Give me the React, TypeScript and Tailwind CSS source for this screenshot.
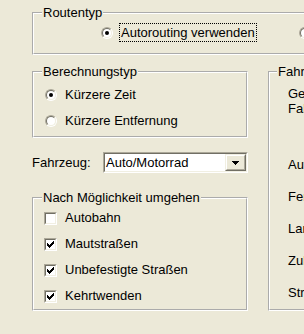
const groupBox =
  'min-w-0 border-2 border-white [--tw-border-style:groove] [border-style:groove]';

const Radio = ({ checked }: { checked?: boolean }) => (
  <span className="flex h-[12px] w-[12px] shrink-0 rounded-full border border-t-[#ACA899] border-l-[#ACA899] border-r-white border-b-white">
    <span className="flex flex-1 items-center justify-center rounded-full border border-t-[#716F64] border-l-[#716F64] border-r-[#F1EFE2] border-b-[#F1EFE2] bg-white">
      {checked && <span className="h-[4px] w-[4px] rounded-full bg-black" />}
    </span>
  </span>
);

const Check = ({ checked }: { checked?: boolean }) => (
  <span className="flex h-[13px] w-[13px] shrink-0 border border-t-[#ACA899] border-l-[#ACA899] border-r-white border-b-white">
    <span className="flex flex-1 items-center justify-center border border-t-[#716F64] border-l-[#716F64] border-r-[#F1EFE2] border-b-[#F1EFE2] bg-white">
      {checked && (
        <svg width="7" height="7" viewBox="0 0 7 7" shapeRendering="crispEdges">
          <rect x="0" y="2" width="1" height="3" fill="#000" />
          <rect x="1" y="3" width="1" height="3" fill="#000" />
          <rect x="2" y="4" width="1" height="3" fill="#000" />
          <rect x="3" y="3" width="1" height="3" fill="#000" />
          <rect x="4" y="2" width="1" height="3" fill="#000" />
          <rect x="5" y="1" width="1" height="3" fill="#000" />
          <rect x="6" y="0" width="1" height="3" fill="#000" />
        </svg>
      )}
    </span>
  </span>
);

const Legend = ({ children, right }: { children: string; right?: boolean }) => (
  <legend className={`${right ? 'ml-[7px]' : 'ml-2'} px-px leading-[14px]`}>{children}</legend>
);

const avoid = [
  { label: 'Autobahn', checked: false },
  { label: 'Mautstraßen', checked: true },
  { label: 'Unbefestigte Straßen', checked: true },
  { label: 'Kehrtwenden', checked: true },
];

const speeds = ['Fernstraßen', 'Landstraßen', 'Zubringer', 'Straßen in Ortschaften'];

export default function App() {
  return (
    <div className="h-[334px] w-[304px] overflow-hidden bg-[#ECE9D8] font-['Liberation_Sans',Arial,sans-serif] text-[13px] text-black">
      <div className="w-[620px] pl-[32px]">
        <fieldset className={`${groupBox} mt-[6px]`}>
          <Legend>Routentyp</Legend>
          <div className="flex items-center pt-[3px] pb-[11px] pl-[67px]">
            <Radio checked />
            <span className="ml-[6px] border border-dotted border-black px-px leading-[17px]">
              Autorouting verwenden
            </span>
            <span className="ml-[42px] flex items-center gap-[8px]">
              <Radio />
              <span className="leading-[17px]">Manuelles Routing</span>
            </span>
          </div>
        </fieldset>

        <div className="mt-[10px] flex gap-[20px]">
          <div className="flex w-[216px] flex-col">
            <fieldset className={groupBox}>
              <Legend>Berechnungstyp</Legend>
              <div className="pt-[3px] pb-[2px] pl-[11px]">
                <label className="flex h-[26px] items-center gap-[8px]">
                  <Radio checked />
                  <span>Kürzere Zeit</span>
                </label>
                <label className="flex h-[26px] items-center gap-[8px]">
                  <Radio />
                  <span>Kürzere Entfernung</span>
                </label>
              </div>
            </fieldset>

            <div className="mt-[14px] flex items-center justify-between">
              <span>Fahrzeug:</span>
              <div className="flex h-[21px] w-[145px] border border-t-[#ACA899] border-l-[#ACA899] border-r-white border-b-white">
                <div className="flex flex-1 border border-t-[#716F64] border-l-[#716F64] border-r-[#F1EFE2] border-b-[#F1EFE2] bg-white">
                  <span className="flex-1 pl-[1px] leading-[17px]">Auto/Motorrad</span>
                  <span className="flex w-[21px] border border-t-[#F1EFE2] border-l-[#F1EFE2] border-r-[#716F64] border-b-[#716F64]">
                    <span className="flex flex-1 items-center justify-center border border-t-white border-l-white border-r-[#ACA899] border-b-[#ACA899] bg-[#ECE9D8]">
                      <svg width="7" height="4" viewBox="0 0 7 4" shapeRendering="crispEdges">
                        <path d="M0 0h7v1h-1v1h-1v1h-1v1h-1v-1h-1v-1h-1v-1h-1z" fill="#000" />
                      </svg>
                    </span>
                  </span>
                </div>
              </div>
            </div>

            <fieldset className={`${groupBox} mt-[18px]`}>
              <Legend>Nach Möglichkeit umgehen</Legend>
              <div className="pl-[10px]">
                {avoid.map((a) => (
                  <label key={a.label} className="flex h-[26px] items-center gap-[8px]">
                    <Check checked={a.checked} />
                    <span>{a.label}</span>
                  </label>
                ))}
              </div>
            </fieldset>
          </div>

          <fieldset className={`${groupBox} w-[260px]`}>
            <Legend right>Fahrgeschwindigkeiten</Legend>
            <div className="pl-[18px] leading-[15px]">
              <div className="mt-[7px]">Geschwindigkeiten für das</div>
              <div>Fahrzeug festlegen (km/h):</div>
              <div className="mt-[41px]">Autobahnen</div>
              {speeds.map((s) => (
                <div key={s} className="mt-[17px]">
                  {s}
                </div>
              ))}
            </div>
          </fieldset>
        </div>
      </div>
    </div>
  );
}
